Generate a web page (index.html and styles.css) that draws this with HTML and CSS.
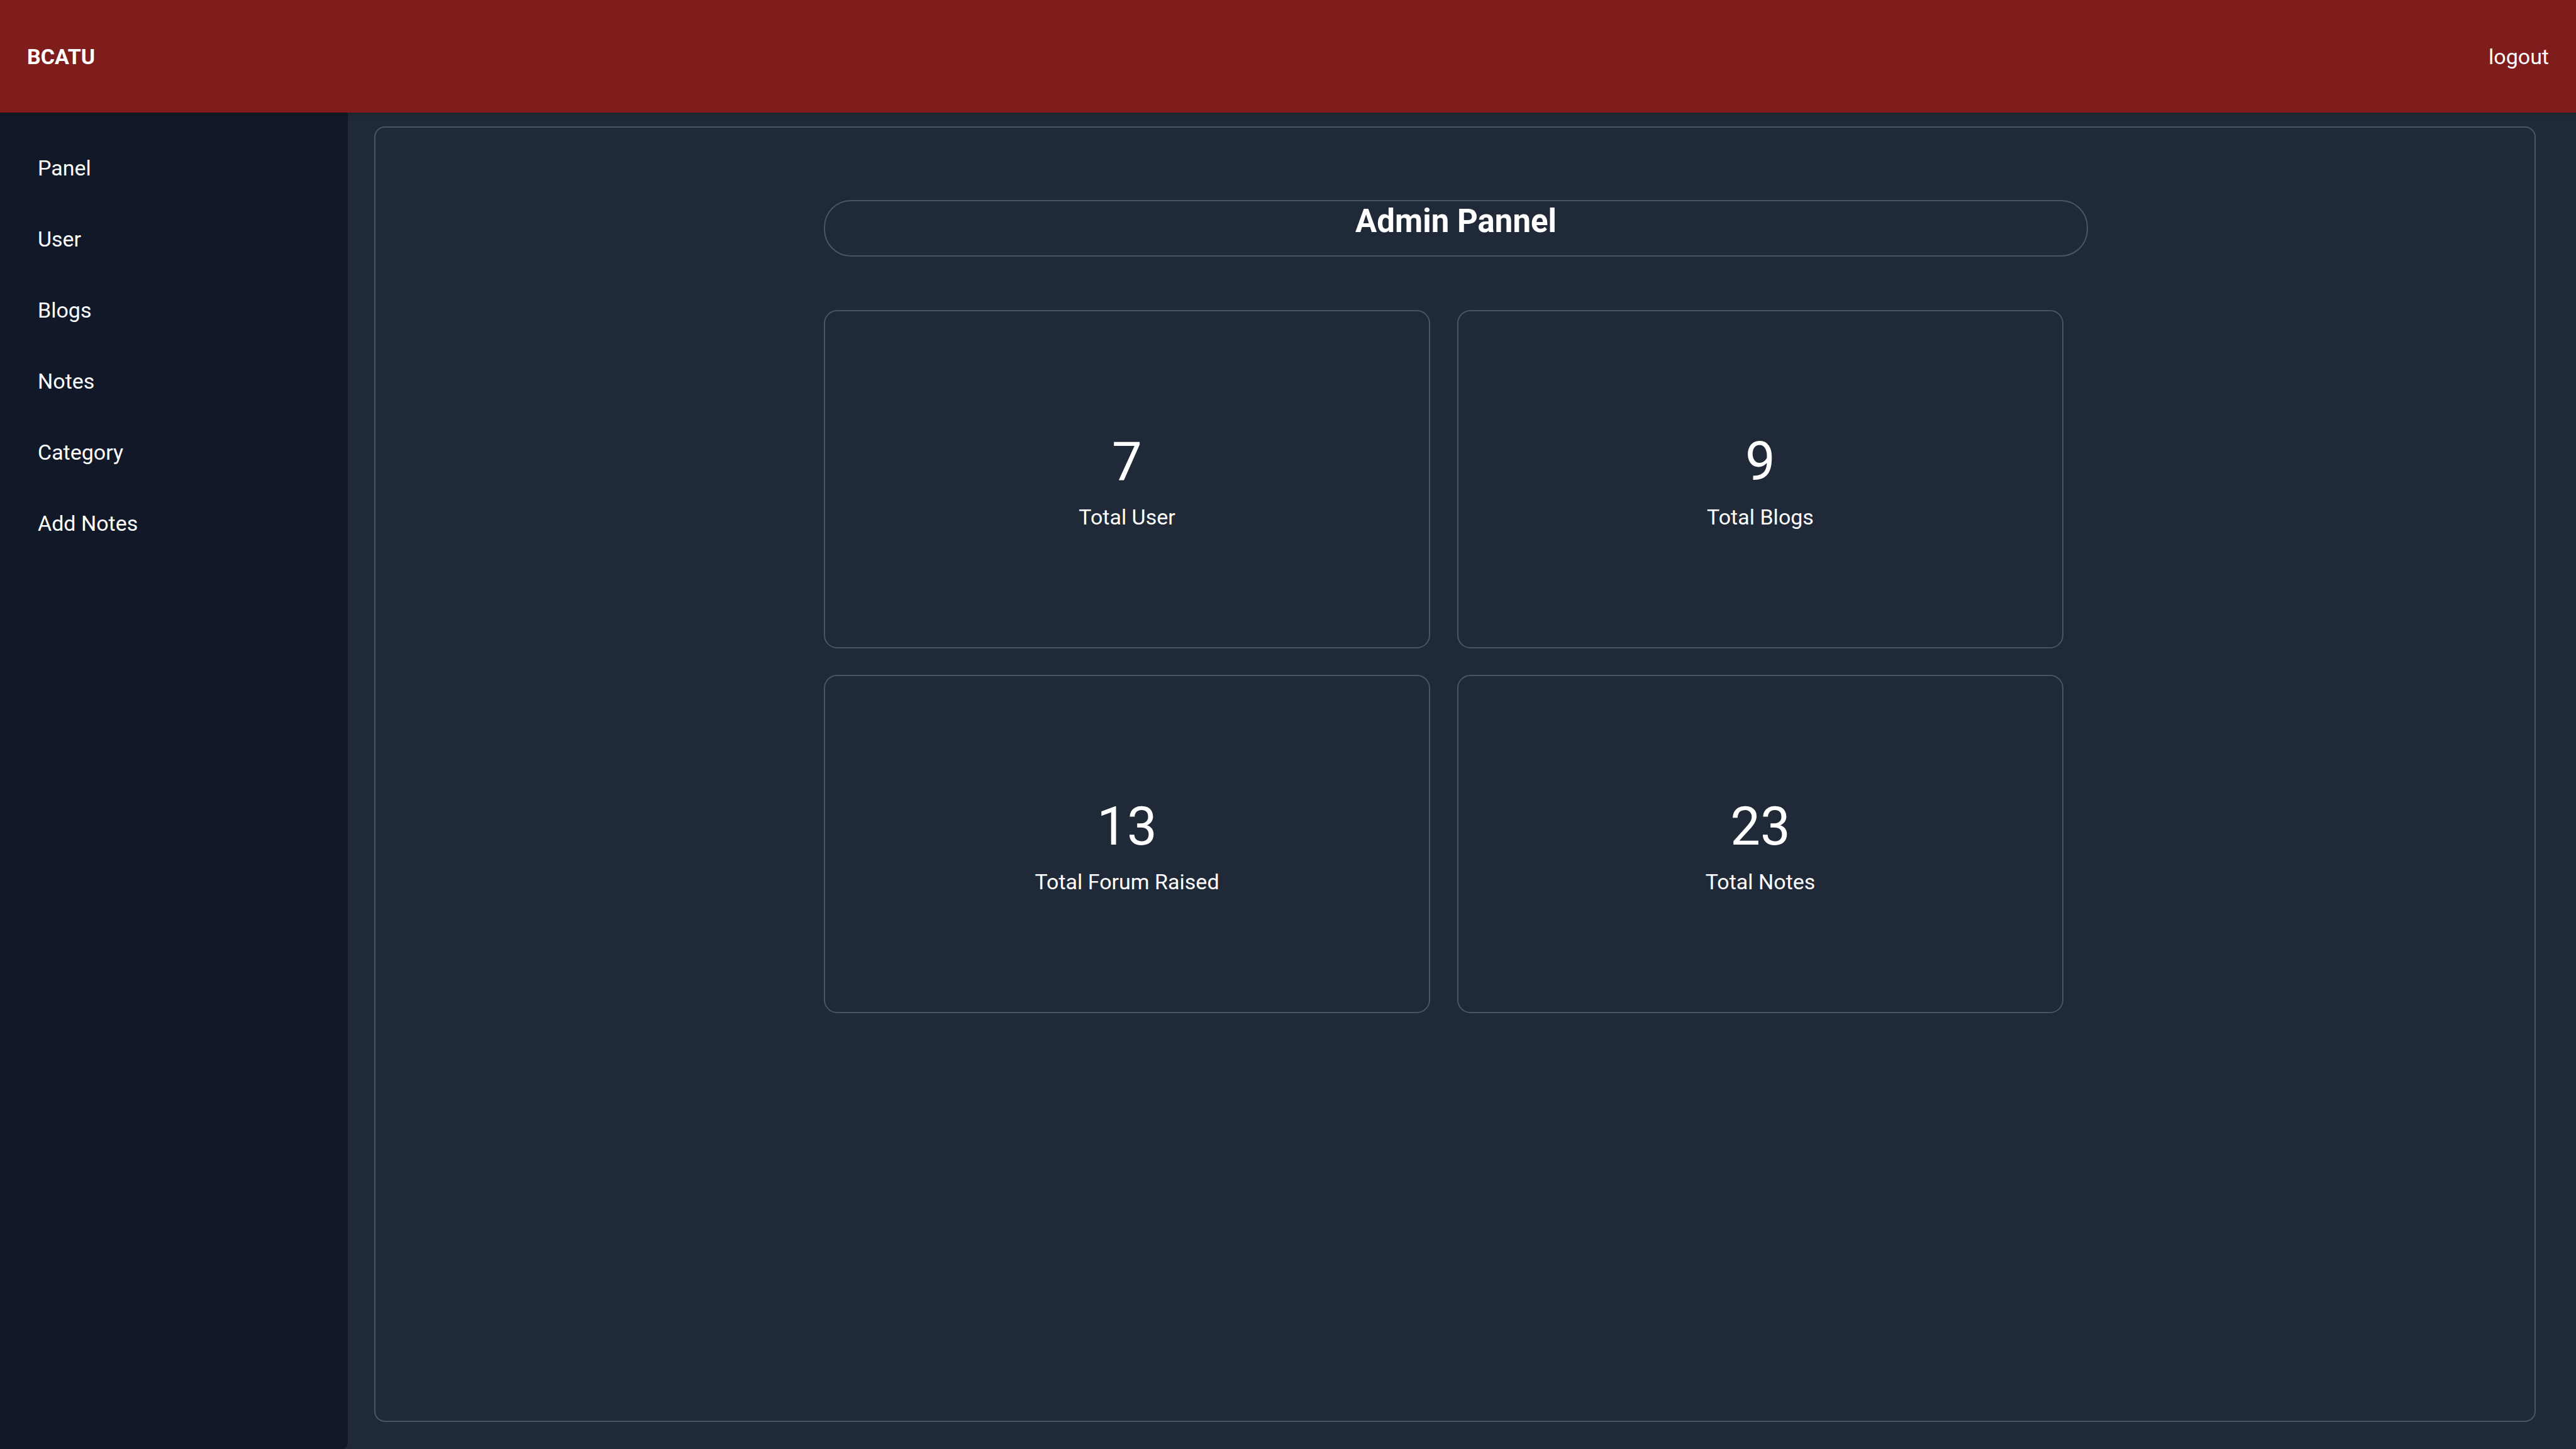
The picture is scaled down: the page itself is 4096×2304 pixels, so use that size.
FILE: index.html
```html
<!DOCTYPE html>
<html lang="en">
<head>
  <meta charset="utf-8">
  <meta name="viewport" content="width=device-width, initial-scale=1">
  <title>BCATU</title>
  <link rel="stylesheet" href="styles.css">
</head>
<body>
  <header class="topbar">
    <a class="brand" href="#">BCATU</a>
    <a class="logout" href="#">logout</a>
  </header>
  <div class="layout">
    <nav class="sidebar">
      <ul class="menu">
        <li><a class="menu-link" href="#">Panel</a></li>
        <li><a class="menu-link" href="#">User</a></li>
        <li><a class="menu-link" href="#">Blogs</a></li>
        <li><a class="menu-link" href="#">Notes</a></li>
        <li><a class="menu-link" href="#">Category</a></li>
        <li><a class="menu-link" href="#">Add Notes</a></li>
      </ul>
    </nav>
    <main class="main">
      <div class="panel">
        <div class="content">
          <h1 class="title">Admin Pannel</h1>
          <div class="cards">
            <section class="card">
              <p class="count">7</p>
              <p class="label">Total User</p>
            </section>
            <section class="card">
              <p class="count">9</p>
              <p class="label">Total Blogs</p>
            </section>
            <section class="card">
              <p class="count">13</p>
              <p class="label">Total Forum Raised</p>
            </section>
            <section class="card">
              <p class="count">23</p>
              <p class="label">Total Notes</p>
            </section>
          </div>
        </div>
      </div>
    </main>
  </div>
</body>
</html>
```
FILE: styles.css
```css
* {
  box-sizing: border-box;
  margin: 0;
  padding: 0;
}

body {
  display: flex;
  flex-direction: column;
  min-height: 100vh;
  background: #1f2937;
  color: #fff;
  font-family: Roboto, "Liberation Sans", sans-serif;
  font-size: 34px;
  line-height: 51px;
}

a {
  color: inherit;
  text-decoration: none;
}

.topbar {
  position: relative;
  z-index: 1;
  display: flex;
  align-items: center;
  justify-content: space-between;
  padding: 65px 43px 63px;
  background: #7f1d1d;
  box-shadow: 0 2px 6px rgba(0, 0, 0, 0.1), 0 2px 4px -2px rgba(0, 0, 0, 0.1);
}

.brand {
  font-weight: 700;
}

.layout {
  display: flex;
  flex: 1;
}

.sidebar {
  flex: 0 0 553px;
  padding-top: 32px;
  background: #111827;
  border-radius: 0 0 9px 0;
}

.menu {
  list-style: none;
}

.menu-link {
  display: block;
  padding: 31px 60px;
}

.main {
  display: flex;
  flex: 1;
  padding: 22px 64px 43px 42px;
}

.panel {
  flex: 1;
  padding: 115px 0 115px 3px;
  border: 2px solid #475569;
  border-radius: 17px;
}

.content {
  display: flex;
  flex-direction: column;
  gap: 85px;
  max-width: 2010px;
  margin: 0 auto;
}

.title {
  min-height: 90px;
  border: 2px solid #475569;
  border-radius: 43px;
  font-size: 51px;
  font-weight: 700;
  line-height: 64px;
  text-align: center;
}

.cards {
  display: grid;
  grid-template-columns: repeat(2, minmax(0, 964px));
  gap: 42px 43px;
}

.card {
  display: flex;
  flex-direction: column;
  align-items: center;
  justify-content: center;
  min-height: 538px;
  border: 2px solid #475569;
  border-radius: 21px;
}

.count {
  font-size: 85px;
  line-height: 121px;
}

.label {
  line-height: 55px;
}
```
